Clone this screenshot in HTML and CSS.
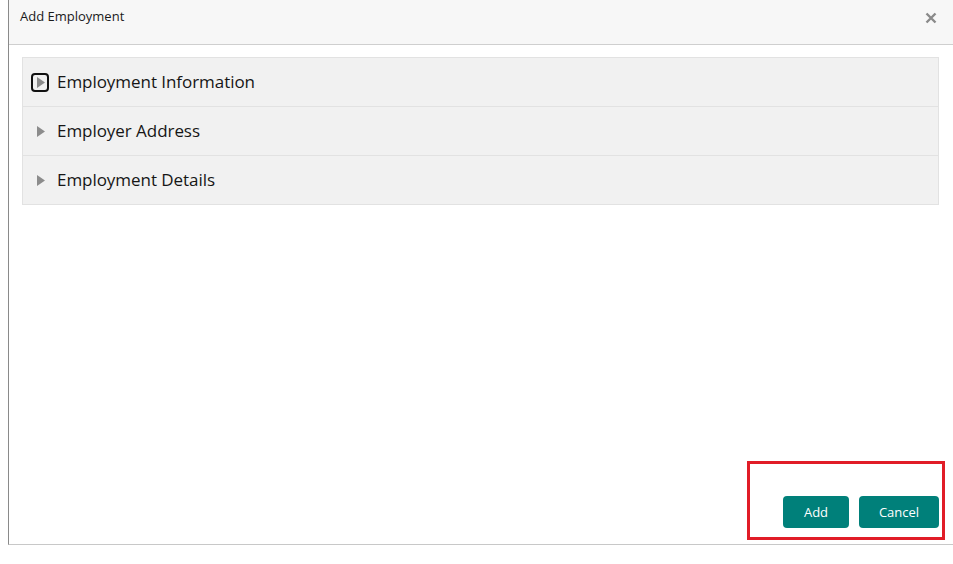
FILE: index.html
```html
<!DOCTYPE html>
<html>
<head>
<meta charset="utf-8">
<link rel="stylesheet" href="styles.css">
</head>
<body>
<div class="dialog">
  <div class="header">
    <span class="title">Add Employment</span>
    <span class="close" aria-label="Close">
      <svg width="12" height="12" viewBox="0 0 12 12"><path d="M1.5 1.5 L10.5 10.5 M10.5 1.5 L1.5 10.5" stroke="#8a8a8a" stroke-width="2.4" stroke-linecap="butt"/></svg>
    </span>
  </div>
  <div class="content">
    <div class="accordion">
      <div class="row">
        <span class="toggle focused"><svg width="8" height="11" viewBox="0 0 8 11"><path d="M0 0 L8 5.5 L0 11 Z" fill="#8c8c8c"/></svg></span>
        <span class="label">Employment Information</span>
      </div>
      <div class="row">
        <span class="toggle"><svg width="8" height="11" viewBox="0 0 8 11"><path d="M0 0 L8 5.5 L0 11 Z" fill="#8c8c8c"/></svg></span>
        <span class="label">Employer Address</span>
      </div>
      <div class="row">
        <span class="toggle"><svg width="8" height="11" viewBox="0 0 8 11"><path d="M0 0 L8 5.5 L0 11 Z" fill="#8c8c8c"/></svg></span>
        <span class="label">Employment Details</span>
      </div>
    </div>
  </div>
  <div class="footer">
    <button class="btn">Add</button>
    <button class="btn btn-cancel">Cancel</button>
    <div class="highlight"></div>
  </div>
</div>
</body>
</html>
```
FILE: styles.css
```css
html, body {
  margin: 0;
  padding: 0;
  background: #ffffff;
}
body {
  font-family: "Open Sans", "Noto Sans", sans-serif;
  color: #1a1a1a;
}
.dialog {
  margin-left: 8px;
  width: 944px;
  height: 544px;
  border-left: 1px solid #8a8a8a;
  border-bottom: 1px solid #c8c8c8;
  display: flex;
  flex-direction: column;
  position: relative;
}
.header {
  height: 44px;
  background: #f7f7f7;
  border-bottom: 1px solid #cfcfcf;
  display: flex;
  align-items: center;
  justify-content: space-between;
  padding: 0 16px 0 11px;
  box-sizing: content-box;
}
.title {
  font-size: 13px;
  margin-top: -12px;
  color: #1a1a1a;
}
.close {
  display: flex;
  margin-top: -8px;
}
.content {
  flex: 1;
  padding: 12px 14px 0 13px;
}
.accordion {
  background: #f1f1f1;
  border: 1px solid #e2e2e2;
}
.row {
  height: 48px;
  display: flex;
  align-items: center;
  border-top: 1px solid #e2e2e2;
  padding-left: 12px;
}
.row:first-child {
  border-top: none;
}
.toggle {
  width: 12px;
  height: 14px;
  display: flex;
  align-items: center;
  justify-content: center;
  margin-right: 10px;
  box-sizing: border-box;
}
.toggle.focused {
  width: 18px;
  height: 19px;
  border: 2px solid #111;
  border-radius: 4px;
  margin-left: -4px;
  margin-right: 8px;
}
.toggle.focused svg {
  margin-left: 1px;
}
.label {
  font-size: 17px;
  color: #161616;
  letter-spacing: -0.05px;
  margin-top: -2px;
}
.footer {
  height: 48px;
  display: flex;
  justify-content: flex-end;
  align-items: flex-start;
  gap: 10px;
  padding-right: 14px;
  position: relative;
}
.btn {
  height: 32px;
  border: none;
  border-radius: 4px;
  background: #00807a;
  color: #ffffff;
  font-family: "Open Sans", "Noto Sans", sans-serif;
  font-size: 13px;
  padding: 0;
  width: 66px;
}
.btn-cancel {
  width: 80px;
}
.highlight {
  position: absolute;
  left: 738px;
  top: -35px;
  width: 192px;
  height: 73px;
  border: 3px solid #e11d27;
}
```
